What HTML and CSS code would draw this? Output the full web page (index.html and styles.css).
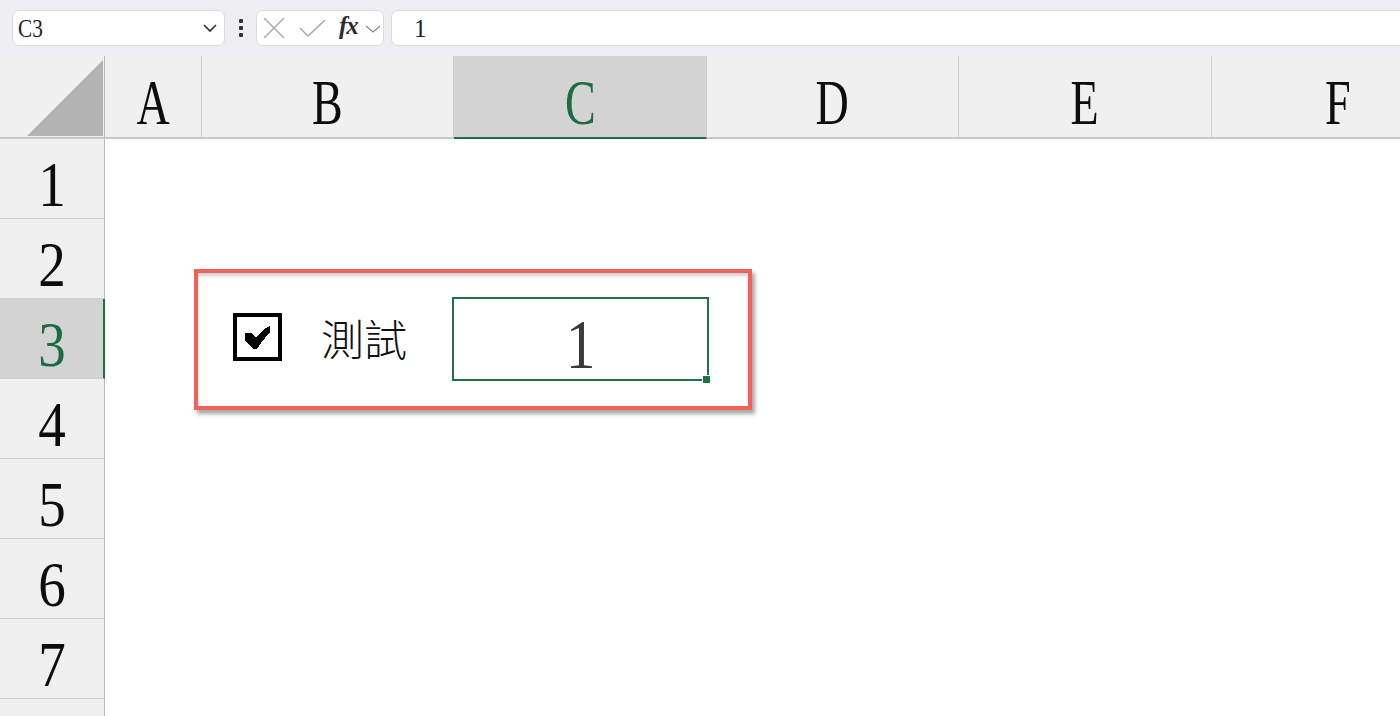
FILE: index.html
```html
<!DOCTYPE html>
<html lang="zh-Hant">
<head>
<meta charset="utf-8">
<title>Sheet</title>
<link rel="stylesheet" href="styles.css">
</head>
<body>
<div class="app">
  <div class="topbar">
    <div class="namebox">
      <span class="name-text">C3</span>
      <svg class="chev" width="16" height="10" viewBox="0 0 16 10"><path d="M2 2 L8 8 L14 2" fill="none" stroke="#333" stroke-width="1.7"/></svg>
    </div>
    <div class="dots"><span></span><span></span><span></span></div>
    <div class="fxbox">
      <svg class="ico-x" width="24" height="24" viewBox="0 0 24 24"><path d="M2 2 L22 22 M22 2 L2 22" stroke="#a6a6a6" stroke-width="1.4" fill="none"/></svg>
      <svg class="ico-ok" width="28" height="20" viewBox="0 0 28 20"><path d="M1 9 L9 17 L26 1" stroke="#a6a6a6" stroke-width="1.4" fill="none"/></svg>
      <span class="fx">fx</span>
      <svg class="chev-s" width="16" height="10" viewBox="0 0 16 10"><path d="M1 2 L8 8 L15 2" fill="none" stroke="#8a8a8a" stroke-width="1.3"/></svg>
    </div>
    <div class="formula"><span class="formula-text">1</span></div>
  </div>

  <div class="sheet">
    <div class="hdr corner"><svg width="76" height="76" viewBox="0 0 76 76"><polygon points="0,76 76,76 76,0" fill="#b3b3b3"/></svg></div>
    <div class="hdr col"><span class="lt">A</span></div>
    <div class="hdr col"><span class="lt">B</span></div>
    <div class="hdr col sel"><span class="lt">C</span></div>
    <div class="hdr col"><span class="lt">D</span></div>
    <div class="hdr col"><span class="lt">E</span></div>
    <div class="hdr col"><span class="lt">F</span></div>

    <div class="rh"><span class="dg">1</span></div>
    <div class="c"></div><div class="c"></div><div class="c"></div><div class="c"></div><div class="c"></div><div class="c"></div>

    <div class="rh"><span class="dg">2</span></div>
    <div class="c"></div><div class="c"></div><div class="c"></div><div class="c"></div><div class="c"></div><div class="c"></div>

    <div class="rh sel"><span class="dg">3</span></div>
    <div class="c"></div>
    <div class="c ctl">
      <svg class="cbx" width="50" height="49" viewBox="0 0 50 49" shape-rendering="crispEdges">
        <rect x="2" y="2" width="45" height="44" fill="#fff" stroke="#000" stroke-width="4"/>
        <polygon points="12,20 19,20 23,25 31,16 37,13 37,19 28,30 24,36 20,36 12,27" fill="#000"/>
      </svg>
      <span class="label">測試</span>
    </div>
    <div class="c active"><span class="val">1</span></div>
    <div class="c"></div><div class="c"></div><div class="c"></div>

    <div class="rh"><span class="dg">4</span></div>
    <div class="c"></div><div class="c"></div><div class="c"></div><div class="c"></div><div class="c"></div><div class="c"></div>

    <div class="rh"><span class="dg">5</span></div>
    <div class="c"></div><div class="c"></div><div class="c"></div><div class="c"></div><div class="c"></div><div class="c"></div>

    <div class="rh"><span class="dg">6</span></div>
    <div class="c"></div><div class="c"></div><div class="c"></div><div class="c"></div><div class="c"></div><div class="c"></div>

    <div class="rh"><span class="dg">7</span></div>
    <div class="c"></div><div class="c"></div><div class="c"></div><div class="c"></div><div class="c"></div><div class="c"></div>

    <div class="rh"><span class="dg"></span></div>
    <div class="c"></div><div class="c"></div><div class="c"></div><div class="c"></div><div class="c"></div><div class="c"></div>

    <div class="annot"></div>
  </div>
</div>
</body>
</html>
```

FILE: styles.css
```css
* { box-sizing: border-box; }
html, body { margin: 0; padding: 0; }
body {
  width: 1400px;
  height: 716px;
  overflow: hidden;
  background: #fff;
  font-family: "Liberation Serif", "Noto Sans CJK TC", serif;
}
.app { width: 1400px; height: 716px; overflow: hidden; }

/* ---------- formula bar ---------- */
.topbar {
  height: 56px;
  background: #efeff1;
  display: flex;
  align-items: flex-start;
  padding: 10px 0 0 12px;
}
.namebox {
  width: 213px;
  height: 36px;
  background: #fff;
  border: 1px solid #dcdcdf;
  border-radius: 7px;
  display: flex;
  align-items: center;
  justify-content: space-between;
  padding: 0 5px 0 5px;
}
.name-text {
  font-size: 25px;
  color: #222;
  display: inline-block;
  transform: scaleX(0.85);
  transform-origin: left center;
  margin-top: 2px;
}
.chev { margin-right: 1px; }
.dots {
  width: 31px;
  height: 36px;
  display: flex;
  flex-direction: column;
  align-items: center;
  justify-content: center;
  gap: 3px;
}
.dots span {
  width: 4px; height: 4px; background: #333; border-radius: 1px;
}
.fxbox {
  width: 128px;
  height: 36px;
  background: #fff;
  border: 1px solid #dcdcdf;
  border-radius: 7px;
  display: flex;
  align-items: center;
  padding-left: 5px;
}
.ico-x { margin-right: 13px; }
.ico-ok { margin-right: 12px; margin-top: 1px; }
.fx {
  font-style: italic;
  font-weight: bold;
  font-size: 25px;
  color: #2b2b2b;
  letter-spacing: -1px;
  margin-right: 7px;
  margin-top: -4px;
}
.chev-s { margin-top: 1px; }
.formula {
  flex: 1;
  height: 36px;
  margin-left: 7px;
  background: #fff;
  border: 1px solid #dcdcdf;
  border-right: none;
  border-radius: 7px 0 0 7px;
  display: flex;
  align-items: center;
  padding-left: 22px;
}
.formula-text { font-size: 25px; color: #222; margin-top: 2px; }

/* ---------- sheet grid ---------- */
.sheet {
  position: relative;
  display: grid;
  grid-template-columns: 105px 97px 252px 253px 252px 253px 252px;
  grid-template-rows: 83px repeat(8, 80px);
}
.hdr {
  background: #f0f0f0;
  border-bottom: 2px solid #c9c9c9;
  border-right: 1px solid #cfcfcf;
  display: flex;
  align-items: center;
  justify-content: center;
  padding-top: 12px;
}
.hdr.corner {
  border-right: 1px solid #b9b9b9;
  align-items: flex-end;
  justify-content: flex-end;
  padding: 0 1px 1px 0;
}
.hdr.corner svg { display: block; }
.hdr.sel {
  background: #d3d3d3;
  border-bottom-color: #1f6d43;
}
.lt {
  display: inline-block;
  font-size: 64px;
  line-height: 1;
  color: #0d0d0d;
  transform: scaleX(0.72);
}
.hdr.sel .lt { color: #1d6b40; }

.rh {
  background: #f0f0f0;
  border-right: 1px solid #b9b9b9;
  border-bottom: 1px solid #d0d0d0;
  display: flex;
  align-items: center;
  justify-content: center;
  padding-top: 12px;
}
.rh.sel {
  background: #d3d3d3;
  border-right: 2px solid #1f6d43;
}
.dg {
  display: inline-block;
  font-size: 64px;
  line-height: 1;
  color: #0d0d0d;
  transform: scaleX(0.86);
}
.rh.sel .dg { color: #1d6b40; }

.c { background: #fff; }

.ctl {
  display: flex;
  align-items: center;
  padding-left: 31px;
  gap: 38px;
}
.cbx { display: block; margin-top: -3px; }
.label {
  font-family: "Noto Sans CJK TC", "Noto Sans CJK SC", sans-serif;
  font-size: 43px;
  font-weight: 300;
  color: #111;
  margin-top: -4px;
}

.active {
  position: relative;
  display: flex;
  align-items: center;
  justify-content: center;
}
.active::before {
  content: "";
  position: absolute;
  top: -2px; left: -2px; right: -2px; bottom: -2px;
  border: 2px solid #217346;
}
.active::after {
  content: "";
  position: absolute;
  right: -3px; bottom: -4px;
  width: 7px; height: 7px;
  background: #217346;
  outline: 1px solid #fff;
}
.val {
  font-size: 70px;
  line-height: 1;
  color: #3a3a3a;
  display: inline-block;
  transform: scaleX(0.85);
  margin-top: 12px;
}

.annot {
  position: absolute;
  left: 194px;
  top: 213px;
  width: 558px;
  height: 141px;
  border: 4px solid #f2625a;
  box-shadow: 3px 4px 4px rgba(0,0,0,0.35), inset 0 3px 3px rgba(0,0,0,0.18);
  pointer-events: none;
}
```
